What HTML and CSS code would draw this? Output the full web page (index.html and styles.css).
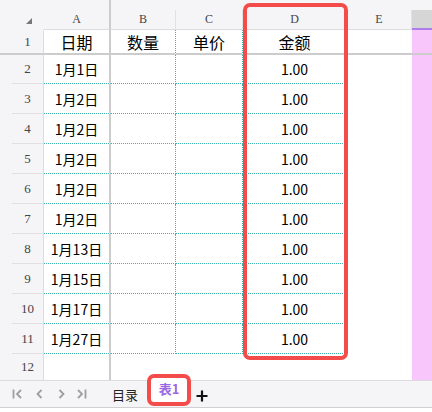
FILE: index.html
```html
<!DOCTYPE html>
<html lang="zh-CN">
<head>
  <meta charset="UTF-8">
  <meta name="viewport" content="width=device-width, initial-scale=1.0">
  <title>表1</title>
  <link rel="stylesheet" href="styles.css">
</head>
<body>
  <div class="sheet">
    <div class="row strip">
      <div></div>
      <div class="freeze"></div>
    </div>

    <div class="row head">
      <div class="corner">
        <svg width="6" height="6" viewBox="0 0 6 6"><polygon points="6,0 6,6 0,6" fill="#777"/></svg>
      </div>
      <div class="ch freeze">A</div>
      <div class="ch">B</div>
      <div class="ch">C</div>
      <div class="ch">D</div>
      <div class="ch">E</div>
      <div class="ch sel"></div>
    </div>

    <div class="row r1">
      <div class="rh"><span class="n">1</span></div>
      <div class="cell title freeze">日期</div>
      <div class="cell title dot-r">数量</div>
      <div class="cell title dot-r">单价</div>
      <div class="cell title dot-r">金额</div>
      <div class="cell"></div>
      <div class="cell pink"></div>
    </div>

    <div class="row first">
      <div class="rh"><span class="n">2</span></div>
      <div class="cell freeze dot-b">1月1日</div>
      <div class="cell dot-r dot-b"></div>
      <div class="cell dot-r dot-b"></div>
      <div class="cell dot-r dot-b">1.00</div>
      <div class="cell"></div>
      <div class="cell pink"></div>
    </div>
    <div class="row">
      <div class="rh"><span class="n">3</span></div>
      <div class="cell freeze dot-b">1月2日</div>
      <div class="cell dot-r dot-b"></div>
      <div class="cell dot-r dot-b"></div>
      <div class="cell dot-r dot-b">1.00</div>
      <div class="cell"></div>
      <div class="cell pink"></div>
    </div>
    <div class="row">
      <div class="rh"><span class="n">4</span></div>
      <div class="cell freeze dot-b">1月2日</div>
      <div class="cell dot-r dot-b"></div>
      <div class="cell dot-r dot-b"></div>
      <div class="cell dot-r dot-b">1.00</div>
      <div class="cell"></div>
      <div class="cell pink"></div>
    </div>
    <div class="row">
      <div class="rh"><span class="n">5</span></div>
      <div class="cell freeze dot-b">1月2日</div>
      <div class="cell dot-r dot-b"></div>
      <div class="cell dot-r dot-b"></div>
      <div class="cell dot-r dot-b">1.00</div>
      <div class="cell"></div>
      <div class="cell pink"></div>
    </div>
    <div class="row">
      <div class="rh"><span class="n">6</span></div>
      <div class="cell freeze dot-b">1月2日</div>
      <div class="cell dot-r dot-b"></div>
      <div class="cell dot-r dot-b"></div>
      <div class="cell dot-r dot-b">1.00</div>
      <div class="cell"></div>
      <div class="cell pink"></div>
    </div>
    <div class="row">
      <div class="rh"><span class="n">7</span></div>
      <div class="cell freeze dot-b">1月2日</div>
      <div class="cell dot-r dot-b"></div>
      <div class="cell dot-r dot-b"></div>
      <div class="cell dot-r dot-b">1.00</div>
      <div class="cell"></div>
      <div class="cell pink"></div>
    </div>
    <div class="row">
      <div class="rh"><span class="n">8</span></div>
      <div class="cell freeze dot-b">1月13日</div>
      <div class="cell dot-r dot-b"></div>
      <div class="cell dot-r dot-b"></div>
      <div class="cell dot-r dot-b">1.00</div>
      <div class="cell"></div>
      <div class="cell pink"></div>
    </div>
    <div class="row">
      <div class="rh"><span class="n">9</span></div>
      <div class="cell freeze dot-b">1月15日</div>
      <div class="cell dot-r dot-b"></div>
      <div class="cell dot-r dot-b"></div>
      <div class="cell dot-r dot-b">1.00</div>
      <div class="cell"></div>
      <div class="cell pink"></div>
    </div>
    <div class="row">
      <div class="rh"><span class="n">10</span></div>
      <div class="cell freeze dot-b">1月17日</div>
      <div class="cell dot-r dot-b"></div>
      <div class="cell dot-r dot-b"></div>
      <div class="cell dot-r dot-b">1.00</div>
      <div class="cell"></div>
      <div class="cell pink"></div>
    </div>
    <div class="row">
      <div class="rh"><span class="n">11</span></div>
      <div class="cell freeze dot-b">1月27日</div>
      <div class="cell dot-r dot-b"></div>
      <div class="cell dot-r dot-b"></div>
      <div class="cell dot-r dot-b">1.00</div>
      <div class="cell"></div>
      <div class="cell pink"></div>
    </div>
    <div class="row last">
      <div class="rh"><span class="n">12</span></div>
      <div class="cell freeze"></div>
      <div class="cell"></div>
      <div class="cell"></div>
      <div class="cell"></div>
      <div class="cell"></div>
      <div class="cell pink"></div>
    </div>

    <!-- highlight around column D -->
    <div class="mark-col"></div>
  </div>

  <div class="tabs">
    <svg class="nav nav-first" width="10" height="10" viewBox="0 0 10 10"><path d="M1.5 0.5V9.5M9 1L5 5L9 9"/></svg>
    <svg class="nav nav-prev" width="10" height="10" viewBox="0 0 10 10"><path d="M6.5 1L2.5 5L6.5 9"/></svg>
    <svg class="nav nav-next" width="10" height="10" viewBox="0 0 10 10"><path d="M1.5 1L5.5 5L1.5 9"/></svg>
    <svg class="nav nav-last" width="10" height="10" viewBox="0 0 10 10"><path d="M1 1L5 5L1 9M8.5 0.5V9.5"/></svg>
    <div class="tab">目录</div>
    <div class="tab active">表1</div>
    <svg class="add" width="12" height="12" viewBox="0 0 12 12"><path d="M6 0.5V11.5M0.5 6H11.5"/></svg>
  </div>
</body>
</html>
```

FILE: styles.css
```css
body {
  margin: 0;
  width: 432px;
  height: 412px;
  overflow: hidden;
  background: #fff;
  font-family: "Noto Sans CJK SC", "Noto Sans", sans-serif;
  color: #000;
}

.sheet {
  position: relative;
}

.row {
  display: grid;
  grid-template-columns: 44px 67px 65px 67px 104px 65px 20px;
  height: 30px;
}
.row > div {
  box-sizing: border-box;
}
.row.strip {
  height: 10px;
  background: #f5f5f8;
}
.row.head {
  height: 20px;
  background: #f5f5f8;
}
.row.r1 {
  height: 25px;
}
.row.first {
  height: 29px;
}
.row.last {
  height: 26px;
}

/* frozen pane line */
.freeze {
  border-right: 2px solid #cccccc;
}

/* column header */
.corner {
  display: flex;
  align-items: flex-end;
  justify-content: flex-end;
  padding: 0 12px 6px 0;
}
.ch {
  display: flex;
  align-items: center;
  justify-content: center;
  border-bottom: 1px solid #dcdcdc;
  border-right: 1px solid #e2e2e2;
  font-family: "Liberation Serif", serif;
  font-size: 12px;
  color: #444;
}
.ch.freeze {
  border-right: 2px solid #cccccc;
}
.ch.sel {
  background: #d6d6d6;
  border-right: none;
  border-bottom: 2px solid #ad7ee9;
}

/* row header */
.rh {
  display: flex;
  padding-left: 12px;
  background: #f5f5f8;
  border-right: 1px solid #dcdcdc;
}
.rh .n {
  flex: 1;
  display: flex;
  align-items: center;
  justify-content: center;
  border-bottom: 1px solid #e0e0e0;
  font-family: "Liberation Serif", serif;
  font-size: 13px;
  color: #444;
}
.row.last .rh .n {
  border-bottom: none;
}
.row.r1 > div {
  border-bottom: 2px solid #cccccc;
}
.row.r1 .rh .n {
  border-bottom: none;
}

/* cells */
.cell {
  display: flex;
  align-items: center;
  justify-content: center;
  font-size: 14px;
  line-height: 1;
}
.cell.title {
  font-size: 16px;
}
.dot-r {
  border-right: 1px dotted #3fb2b2;
}
.dot-b {
  border-bottom: 1px dotted #3fb2b2;
}
.pink {
  background: #f8c6fb;
}

.mark-col {
  position: absolute;
  left: 243px;
  top: 3px;
  width: 105px;
  height: 357px;
  box-sizing: border-box;
  border: 4px solid #f44c4a;
  border-radius: 7px;
}

/* sheet tabs */
.tabs {
  display: flex;
  align-items: center;
  height: 26px;
  background: #f5f5f8;
  border-top: 1px solid #dcdcdc;
  border-bottom: 1px solid #d0d0d0;
}
.nav {
  fill: none;
  stroke: #9e9e9e;
  stroke-width: 1.8;
}
.nav-first {
  margin-left: 12px;
}
.nav-prev,
.nav-next {
  margin-left: 13px;
}
.nav-last {
  margin-left: 9px;
}
.tab {
  font-size: 13px;
  color: #222;
  margin-left: 25px;
}
.tab.active {
  align-self: flex-start;
  margin: -7px 0 0 9px;
  width: 44px;
  height: 32px;
  box-sizing: border-box;
  display: flex;
  align-items: center;
  justify-content: center;
  background: #fff;
  border: 4px solid #f44c4a;
  border-radius: 7px;
  color: #9c68e4;
  font-weight: bold;
  padding-bottom: 4px;
}
.add {
  margin-left: 5px;
  margin-top: 4px;
  fill: none;
  stroke: #111;
  stroke-width: 2.2;
}
```
